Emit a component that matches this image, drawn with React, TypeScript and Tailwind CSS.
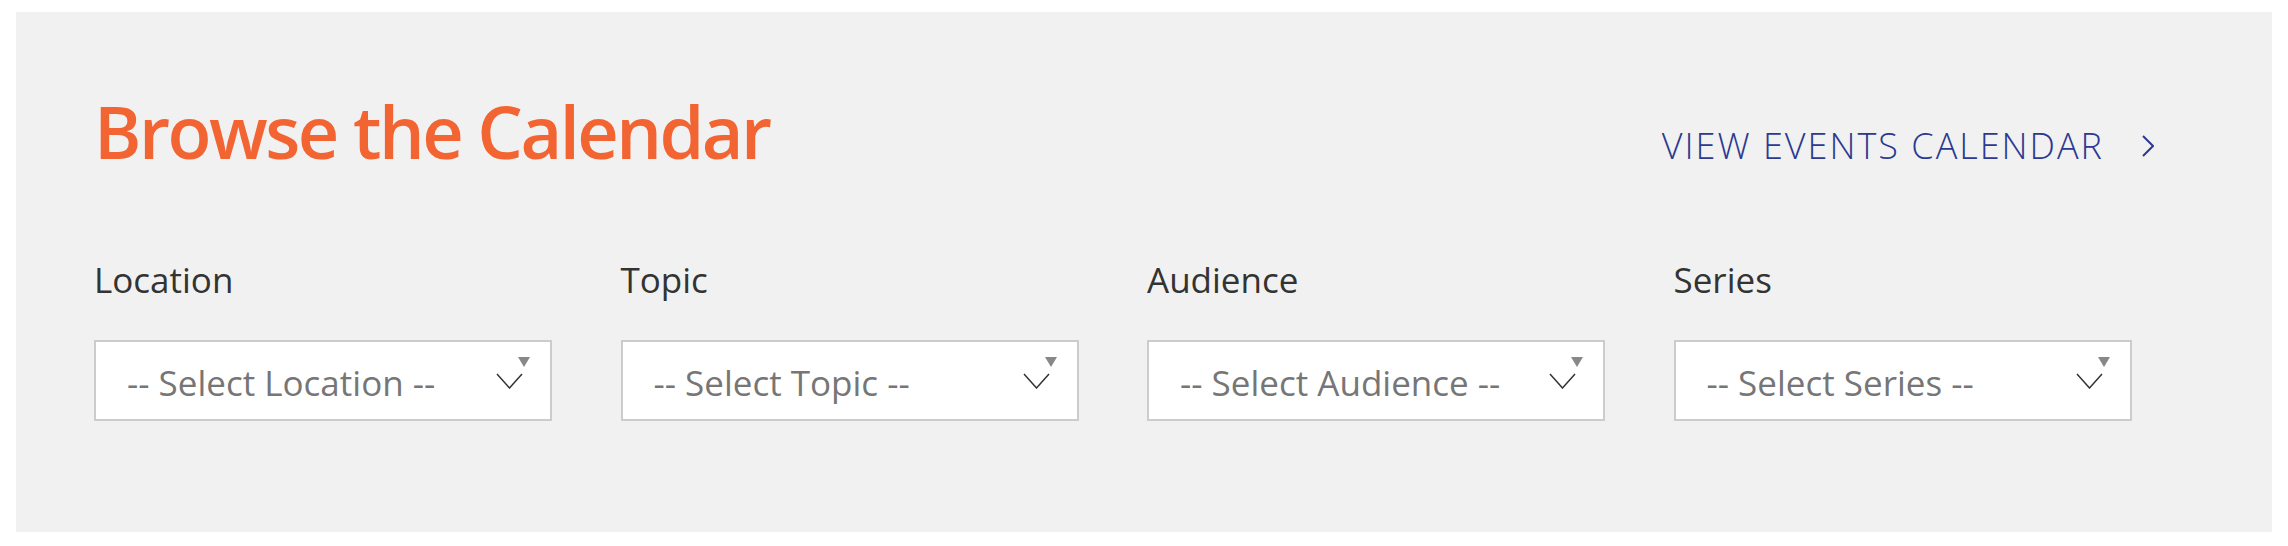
import React from "react";

const filters = [
  { label: "Location", placeholder: "-- Select Location --" },
  { label: "Topic", placeholder: "-- Select Topic --" },
  { label: "Audience", placeholder: "-- Select Audience --" },
  { label: "Series", placeholder: "-- Select Series --" },
];

const SelectArrow = () => (
  <svg width="34" height="32" viewBox="0 0 34 32" className="shrink-0 mb-[15px]">
    <polygon points="22,0 34,0 28,10" fill="#888888" />
    <polyline points="1,17 13.5,31 26,17" fill="none" stroke="#333333" strokeWidth="1.5" />
  </svg>
);

const App = () => {
  return (
    <div className="w-[2288px] h-[546px] bg-white px-[16px] pt-[12px] font-['Open_Sans','Noto_Sans',sans-serif]">
      <section className="h-[520px] bg-[#f1f1f1] pl-[78px] pr-[72px] pt-[83px]">
        {/* Header */}
        <div className="flex items-baseline justify-between pr-[46px]">
          <h2 className="text-[72px] leading-none font-semibold text-[#f26532] tracking-[-2.5px]">
            Browse the Calendar
          </h2>
          <a href="#" className="flex items-baseline gap-[38px] text-[36px] leading-none font-light tracking-[2px] text-[#2b3990]">
            VIEW EVENTS CALENDAR
            <svg width="12" height="22" viewBox="0 0 12 22" className="self-center">
              <polyline points="1,1 11,11 1,21" fill="none" stroke="#2b3990" strokeWidth="2" />
            </svg>
          </a>
        </div>

        {/* Filters */}
        <div className="grid grid-cols-4 mt-[95px]">
          {filters.map((f) => (
            <div key={f.label} className="flex flex-col">
              <label className="text-[35px] leading-none font-medium text-[#333333]">{f.label}</label>
              <div className="mt-[43px] w-[458px] h-[81px] bg-white border-2 border-[#cccccc] flex items-center justify-between pl-[31px] pr-[20px]">
                <span className="text-[35px] leading-none text-[#767676] pt-[3px]">{f.placeholder}</span>
                <SelectArrow />
              </div>
            </div>
          ))}
        </div>
      </section>
    </div>
  );
};

export default App;
